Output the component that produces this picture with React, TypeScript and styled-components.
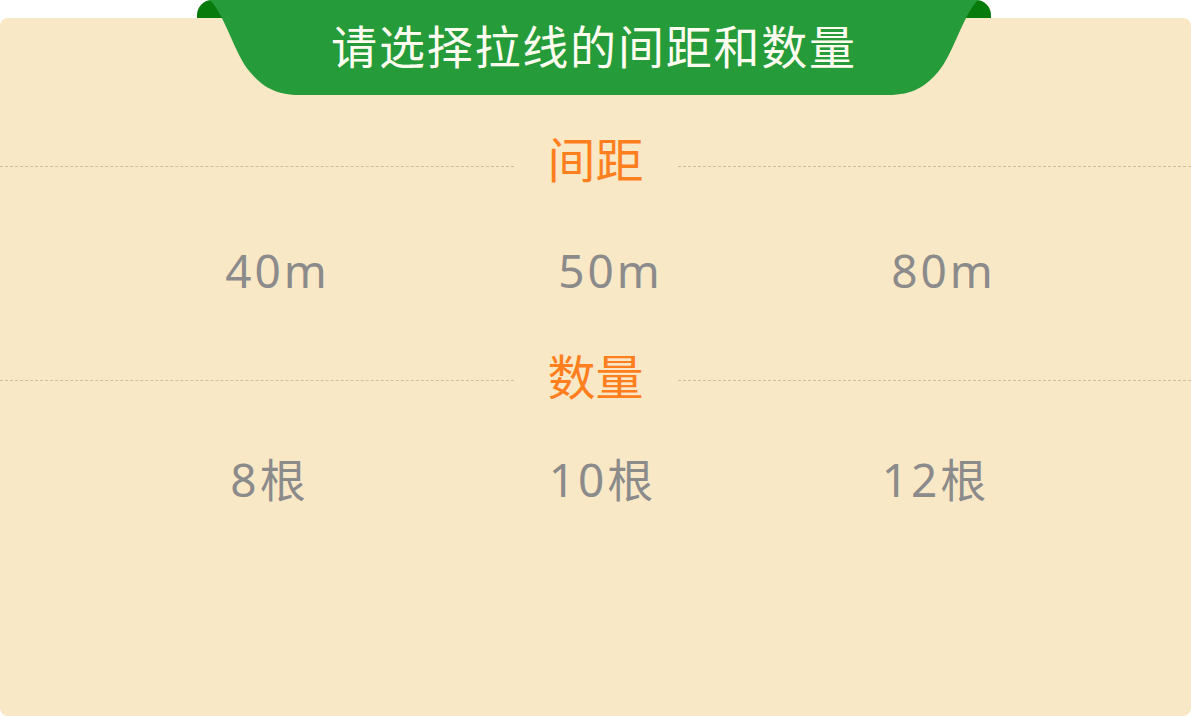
import React from "react";
import styled, { createGlobalStyle } from "styled-components";

const GlobalStyle = createGlobalStyle`
  html, body { margin: 0; padding: 0; background: #ffffff; }
  * { box-sizing: border-box; }
`;

const Page = styled.div`
  position: relative;
  width: 1191px;
  height: 716px;
  padding-top: 18px;
  font-family: "Noto Sans", "Noto Sans CJK SC", sans-serif;
`;

const Card = styled.div`
  height: 698px;
  background: #f9e8c6;
  border-radius: 8px;
  padding-top: 109px;
  display: flex;
  flex-direction: column;
`;

const Ribbon = styled.div`
  position: absolute;
  top: 0;
  left: 197px;
  width: 794px;
  height: 95px;
  display: flex;
  justify-content: center;
  align-items: flex-start;
`;

const RibbonShape = styled.svg`
  position: absolute;
  inset: 0;
  width: 100%;
  height: 100%;
`;

const RibbonTitle = styled.h1`
  position: relative;
  margin: 0;
  padding-top: 14px;
  font-family: "Noto Sans CJK SC", sans-serif;
  font-weight: 400;
  font-size: 46px;
  line-height: 60px;
  letter-spacing: 1.8px;
  color: #fffdf0;
`;

const SectionRow = styled.div<{ $top: number; $lineOffset: number }>`
  display: flex;
  align-items: flex-start;
  height: 60px;
  margin-top: ${(p) => p.$top}px;

  &::before,
  &::after {
    content: "";
    flex: 1;
    margin-top: ${(p) => p.$lineOffset}px;
    border-top: 1px dashed #cdbfa3;
  }
`;

const SectionTitle = styled.h2`
  width: 164px;
  margin: 0;
  text-align: center;
  font-family: "Noto Sans CJK SC", sans-serif;
  font-weight: 400;
  font-size: 48px;
  line-height: 60px;
  color: #ff7f1e;
`;

const OptionRow = styled.div<{ $top: number; $inset: number }>`
  display: grid;
  grid-template-columns: repeat(3, 333px);
  padding-left: ${(p) => p.$inset}px;
  margin-top: ${(p) => p.$top}px;
`;

const Option = styled.div`
  height: 60px;
  text-align: center;
  font-family: "Noto Sans", "Noto Sans CJK SC", sans-serif;
  font-size: 46px;
  line-height: 60px;
  letter-spacing: 3px;
  color: #8b8b8b;
`;

const spacings = ["40m", "50m", "80m"];
const counts = ["8根", "10根", "12根"];

export default function App() {
  return (
    <>
      <GlobalStyle />
      <Page>
        <Card>
          <SectionRow $top={0} $lineOffset={39}>
            <SectionTitle>间距</SectionTitle>
          </SectionRow>
          <OptionRow $top={53} $inset={111}>
            {spacings.map((s) => (
              <Option key={s}>{s}</Option>
            ))}
          </OptionRow>
          <SectionRow $top={44} $lineOffset={36}>
            <SectionTitle>数量</SectionTitle>
          </SectionRow>
          <OptionRow $top={45} $inset={103}>
            {counts.map((c) => (
              <Option key={c}>{c}</Option>
            ))}
          </OptionRow>
        </Card>
        <Ribbon>
          <RibbonShape viewBox="0 0 794 95" preserveAspectRatio="none" aria-hidden="true">
            <path d="M0 18 V15 A15 15 0 0 1 15 0 H45 V18 Z" fill="#077c0c" />
            <path d="M794 18 V15 A15 15 0 0 0 779 0 H749 V18 Z" fill="#077c0c" />
            <path
              d="M13 0 C28 15 38 55 53 72 C65 86 78 95 103 95 H691 C716 95 729 86 741 72 C756 55 766 15 781 0 Z"
              fill="#259b3a"
            />
          </RibbonShape>
          <RibbonTitle>请选择拉线的间距和数量</RibbonTitle>
        </Ribbon>
      </Page>
    </>
  );
}
